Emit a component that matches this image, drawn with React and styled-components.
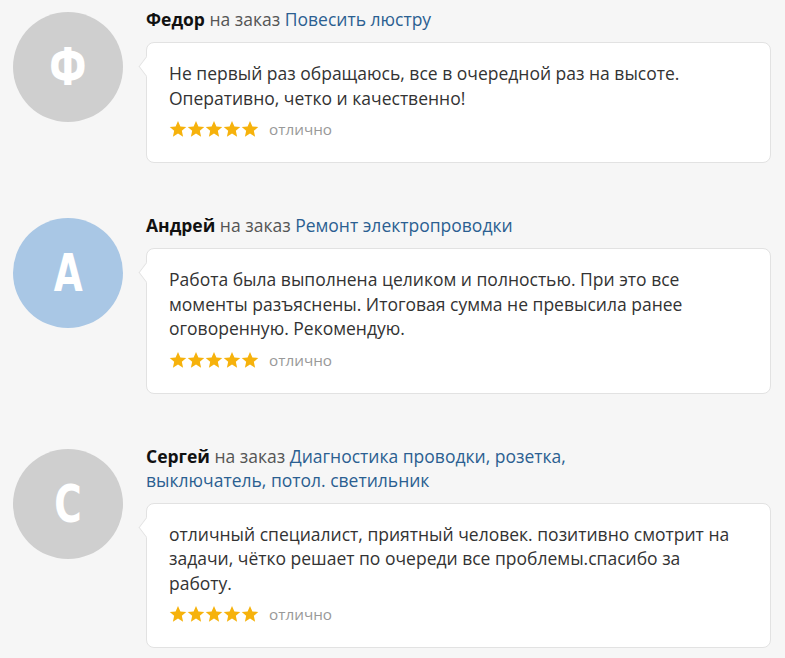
import React from "react";
import styled, { createGlobalStyle } from "styled-components";

const Global = createGlobalStyle`
  html, body { margin: 0; padding: 0; background: #f6f6f6; }
  body { font-family: "Open Sans", "Liberation Sans", sans-serif; color: #333; }
`;

const List = styled.div`
  display: flex;
  flex-direction: column;
  gap: 50px;
  padding: 7px 14px 0 13px;
`;

const Review = styled.div`
  display: flex;
  align-items: flex-start;
  gap: 23px;
`;

const Avatar = styled.div`
  flex: 0 0 110px;
  width: 110px;
  height: 110px;
  margin-top: 5px;
  border-radius: 50%;
  background: ${(p) => p.$bg};
  color: #fff;
  display: flex;
  align-items: center;
  justify-content: center;
`;

const Letter = styled.span`
  display: inline-block;
  font-family: "DejaVu Sans", "Open Sans", sans-serif;
  font-weight: 700;
  font-size: 52px;
  line-height: 1;
  transform: scaleX(0.72);
`;

const Body = styled.div`
  flex: 1;
  min-width: 0;
  display: flex;
  flex-direction: column;
  gap: 11px;
`;

const Header = styled.div`
  max-width: 470px;
  font-size: 17.5px;
  line-height: 24px;
  color: #555;
`;

const Name = styled.b`
  color: #111;
  font-weight: 700;
`;

const OrderLink = styled.a`
  color: #2b5f91;
  text-decoration: none;
`;

const Card = styled.div`
  position: relative;
  background: #fff;
  border: 1px solid #e2e2e2;
  border-radius: 8px;
  padding: 18px 36px 23px 22px;

  &::before {
    content: "";
    position: absolute;
    left: -7px;
    top: 17px;
    width: 12px;
    height: 12px;
    background: #fff;
    border-left: 1px solid #e2e2e2;
    border-bottom: 1px solid #e2e2e2;
    transform: rotate(45deg) skew(8deg, 8deg);
  }
`;

const Text = styled.div`
  font-size: 17.5px;
  line-height: 24.5px;
  color: #333;
`;

const RatingRow = styled.div`
  display: flex;
  align-items: center;
  gap: 10px;
  margin-top: 9px;
`;

const Stars = styled.div`
  display: flex;
  height: 20px;
  align-items: center;
`;

const Mark = styled.span`
  font-size: 15.3px;
  color: #999;
  line-height: 20px;
`;

const Star = () => (
  <svg width="18" height="18" viewBox="0 0 24 24">
    <polygon
      points="12,1.2 15.2,8.5 23,9.2 17.1,14.4 18.8,22.2 12,18.1 5.2,22.2 6.9,14.4 1,9.2 8.8,8.5"
      fill="#f6b20c"
    />
  </svg>
);

const reviews = [
  {
    letter: "Ф",
    bg: "#cfcfcf",
    name: "Федор",
    order: "Повесить люстру",
    text: "Не первый раз обращаюсь, все в очередной раз на высоте. Оперативно, четко и качественно!",
  },
  {
    letter: "А",
    bg: "#a9c7e5",
    name: "Андрей",
    order: "Ремонт электропроводки",
    text: "Работа была выполнена целиком и полностью. При это все моменты разъяснены. Итоговая сумма не превысила ранее оговоренную. Рекомендую.",
  },
  {
    letter: "С",
    bg: "#cfcfcf",
    name: "Сергей",
    order: "Диагностика проводки, розетка, выключатель, потол. светильник",
    text: "отличный специалист, приятный человек. позитивно смотрит на задачи, чётко решает по очереди все проблемы.спасибо за работу.",
  },
];

export default function App() {
  return (
    <>
      <Global />
      <List>
        {reviews.map((r) => (
          <Review key={r.name}>
            <Avatar $bg={r.bg}>
              <Letter>{r.letter}</Letter>
            </Avatar>
            <Body>
              <Header>
                <Name>{r.name}</Name> на заказ <OrderLink href="#">{r.order}</OrderLink>
              </Header>
              <Card>
                <Text>{r.text}</Text>
                <RatingRow>
                  <Stars>
                    {[0, 1, 2, 3, 4].map((i) => (
                      <Star key={i} />
                    ))}
                  </Stars>
                  <Mark>отлично</Mark>
                </RatingRow>
              </Card>
            </Body>
          </Review>
        ))}
      </List>
    </>
  );
}
